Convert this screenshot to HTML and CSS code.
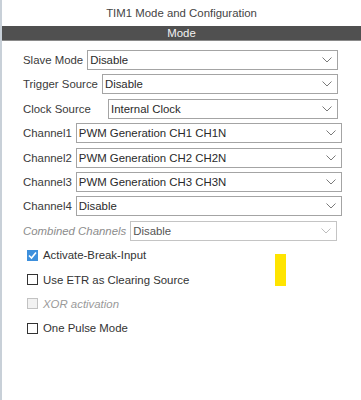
FILE: index.html
```html
<!DOCTYPE html>
<html lang="en">
<head>
  <meta charset="UTF-8">
  <title>TIM1 Mode and Configuration</title>
  <link rel="stylesheet" href="styles.css">
</head>
<body>

  <div class="panel-title">TIM1 Mode and Configuration</div>
  <div class="section-bar">Mode</div>

  <div class="form">
    <div class="row">
      <span class="label">Slave Mode</span>
      <div class="select"><span>Disable</span><svg class="chev" viewBox="0 0 10 6"><path d="M0.5 0.5 L5 5 L9.5 0.5"/></svg></div>
    </div>
    <div class="row">
      <span class="label">Trigger Source</span>
      <div class="select"><span>Disable</span><svg class="chev" viewBox="0 0 10 6"><path d="M0.5 0.5 L5 5 L9.5 0.5"/></svg></div>
    </div>
    <div class="row">
      <span class="label label-clock">Clock Source</span>
      <div class="select"><span>Internal Clock</span><svg class="chev" viewBox="0 0 10 6"><path d="M0.5 0.5 L5 5 L9.5 0.5"/></svg></div>
    </div>
    <div class="row row-wide">
      <span class="label">Channel1</span>
      <div class="select"><span>PWM Generation CH1 CH1N</span><svg class="chev" viewBox="0 0 10 6"><path d="M0.5 0.5 L5 5 L9.5 0.5"/></svg></div>
    </div>
    <div class="row row-wide">
      <span class="label">Channel2</span>
      <div class="select"><span>PWM Generation CH2 CH2N</span><svg class="chev" viewBox="0 0 10 6"><path d="M0.5 0.5 L5 5 L9.5 0.5"/></svg></div>
    </div>
    <div class="row row-wide">
      <span class="label">Channel3</span>
      <div class="select"><span>PWM Generation CH3 CH3N</span><svg class="chev" viewBox="0 0 10 6"><path d="M0.5 0.5 L5 5 L9.5 0.5"/></svg></div>
    </div>
    <div class="row row-wide">
      <span class="label">Channel4</span>
      <div class="select"><span>Disable</span><svg class="chev" viewBox="0 0 10 6"><path d="M0.5 0.5 L5 5 L9.5 0.5"/></svg></div>
    </div>
    <div class="row row-narrow disabled">
      <span class="label">Combined Channels</span>
      <div class="select"><span>Disable</span><svg class="chev" viewBox="0 0 10 6"><path d="M0.5 0.5 L5 5 L9.5 0.5"/></svg></div>
    </div>

    <div class="check-row">
      <span class="box checked"><svg viewBox="0 0 11 11"><path d="M2 5.5 L4.5 8 L9 2.5"/></svg></span>
      <span>Activate-Break-Input</span>
    </div>
    <div class="check-row">
      <span class="box"></span>
      <span>Use ETR as Clearing Source</span>
    </div>
    <div class="check-row disabled">
      <span class="box"></span>
      <span>XOR activation</span>
    </div>
    <div class="check-row">
      <span class="box"></span>
      <span>One Pulse Mode</span>
    </div>
  </div>

  <!-- highlight marker -->
  <div class="marker"></div>

</body>
</html>
```

FILE: styles.css
```css
html, body {
  height: 100%;
}

body {
  margin: 0;
  font-family: "Liberation Sans", Arial, sans-serif;
  font-size: 11.4px;
  color: #3a3a3a;
  background: #fff;
  border-left: 2px solid #c8d0d8;
  box-sizing: border-box;
  position: relative;
}

.panel-title {
  height: 26px;
  line-height: 26px;
  text-align: center;
  color: #444;
}

.section-bar {
  height: 14px;
  line-height: 14px;
  text-align: center;
  background: #505050;
  color: #f2f2f2;
  border-bottom: 1px solid #8a8a8a;
}

.form {
  display: flex;
  flex-direction: column;
  gap: 4.4px;
  padding: 9px 0 0 21px;
}

.row {
  display: flex;
  align-items: center;
  height: 20px;
  padding-right: 23px;
}

.row-wide {
  padding-right: 19px;
}

.row-narrow {
  padding-right: 24px;
}

.label {
  flex: none;
  margin-right: 4px;
  white-space: nowrap;
}

.label-clock {
  width: 81px;
}

.select {
  flex: 1;
  height: 20px;
  box-sizing: border-box;
  border: 1px solid #a4a4a4;
  display: flex;
  align-items: center;
  justify-content: space-between;
  padding: 0 5px 0 2px;
  color: #2a2a2a;
  background: #fff;
}

.chev {
  width: 10px;
  height: 6px;
  fill: none;
  stroke: #7a7a7a;
  stroke-width: 1;
}

.row.disabled .label {
  font-style: italic;
  color: #8c8c8c;
}

.row.disabled .select {
  border-color: #c4c4c4;
  color: #555;
}

.row.disabled .chev {
  stroke: #bdbdbd;
}

.check-row {
  display: flex;
  align-items: center;
  height: 20px;
  padding-left: 4px;
  gap: 5px;
  color: #333;
}

.box {
  width: 11px;
  height: 11px;
  box-sizing: border-box;
  border: 1px solid #333;
  background: #fff;
  display: flex;
}

.box.checked {
  border: none;
  background: #3d8fdc;
}

.box svg {
  width: 11px;
  height: 11px;
  fill: none;
  stroke: #fff;
  stroke-width: 1.6;
}

.check-row.disabled {
  font-style: italic;
  color: #9a9a9a;
}

.check-row.disabled .box {
  border-color: #c2c2c2;
  background: #f2f2f2;
}

.marker {
  position: absolute;
  left: 273px;
  top: 254px;
  width: 11px;
  height: 32px;
  background: #ffe400;
}
```
